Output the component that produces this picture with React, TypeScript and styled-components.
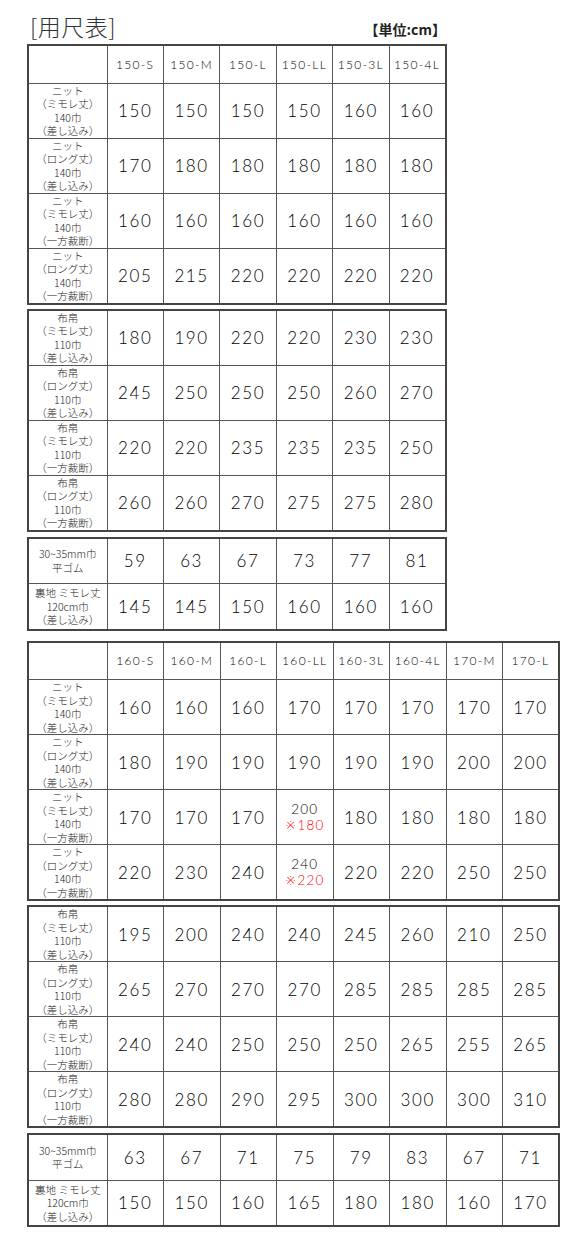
import styled, { createGlobalStyle } from "styled-components";

const GlobalStyle = createGlobalStyle`
  body {
    margin: 0;
    background: #fff;
    color: #222;
    font-family: "Noto Sans CJK JP", "Noto Sans", sans-serif;
  }
`;

const Page = styled.div`
  width: 583px;
  padding: 0 0 20px 27px;
  box-sizing: border-box;
`;

const TitleBar = styled.div`
  display: flex;
  justify-content: space-between;
  align-items: flex-end;
  width: 419px;
  height: 44px;
  padding-bottom: 6px;
  box-sizing: border-box;
`;

const Title = styled.h1`
  margin: 0 0 0 3px;
  font-size: 23px;
  line-height: 1;
  font-weight: 300;
  color: #333;
  letter-spacing: 0.5px;
`;

const Unit = styled.span`
  margin-bottom: 2px;
  font-size: 14px;
  line-height: 1;
  font-weight: 700;
  color: #222;
`;

const Block = styled.div<{ $gap: number }>`
  margin-top: ${(p) => p.$gap}px;
`;

const Group = styled.table<{ $width: number; $gap: number }>`
  width: ${(p) => p.$width}px;
  margin-top: ${(p) => p.$gap}px;
  border-collapse: collapse;
  table-layout: fixed;
  border: 2px solid #444;
`;

const Cell = styled.td<{ $h: number }>`
  height: ${(p) => p.$h}px;
  padding: 0;
  border: 1px solid #555;
  text-align: center;
  vertical-align: middle;
  box-sizing: border-box;
`;

const HeadCell = styled(Cell)`
  font-family: Lato, "DejaVu Sans", sans-serif;
  font-size: 12px;
  font-weight: 300;
  letter-spacing: 1.3px;
  color: #000;
`;

const Label = styled(Cell)`
  font-size: 10.5px;
  line-height: 13.5px;
  font-weight: 300;
  color: #222;
  white-space: pre-line;
`;

const Num = styled(Cell)`
  font-family: Lato, "DejaVu Sans", sans-serif;
  font-size: 17px;
  font-weight: 300;
  letter-spacing: 1.6px;
  color: #000;
`;

const Stack = styled.div`
  display: flex;
  flex-direction: column;
  align-items: center;
  font-size: 13.5px;
  font-weight: 300;
  line-height: 16px;
  letter-spacing: 1.2px;
`;

const Note = styled.span`
  color: #f00;
`;

type Value = number | { main: number; note: number };
type Row = { label: string; values: Value[] };

const knitMimoreSashi = "ニット\n（ミモレ丈）\n140巾\n（差し込み）";
const knitLongSashi = "ニット\n（ロング丈）\n140巾\n（差し込み）";
const knitMimoreIppo = "ニット\n（ミモレ丈）\n140巾\n（一方裁断）";
const knitLongIppo = "ニット\n（ロング丈）\n140巾\n（一方裁断）";
const fabMimoreSashi = "布帛\n（ミモレ丈）\n110巾\n（差し込み）";
const fabLongSashi = "布帛\n（ロング丈）\n110巾\n（差し込み）";
const fabMimoreIppo = "布帛\n（ミモレ丈）\n110巾\n（一方裁断）";
const fabLongIppo = "布帛\n（ロング丈）\n110巾\n（一方裁断）";
const gum = "30~35mm巾\n平ゴム";
const lining = "裏地 ミモレ丈\n120cm巾\n（差し込み）";

const tables: { sizes: string[]; groups: Row[][] }[] = [
  {
    sizes: ["150-S", "150-M", "150-L", "150-LL", "150-3L", "150-4L"],
    groups: [
      [
        { label: knitMimoreSashi, values: [150, 150, 150, 150, 160, 160] },
        { label: knitLongSashi, values: [170, 180, 180, 180, 180, 180] },
        { label: knitMimoreIppo, values: [160, 160, 160, 160, 160, 160] },
        { label: knitLongIppo, values: [205, 215, 220, 220, 220, 220] },
      ],
      [
        { label: fabMimoreSashi, values: [180, 190, 220, 220, 230, 230] },
        { label: fabLongSashi, values: [245, 250, 250, 250, 260, 270] },
        { label: fabMimoreIppo, values: [220, 220, 235, 235, 235, 250] },
        { label: fabLongIppo, values: [260, 260, 270, 275, 275, 280] },
      ],
      [
        { label: gum, values: [59, 63, 67, 73, 77, 81] },
        { label: lining, values: [145, 145, 150, 160, 160, 160] },
      ],
    ],
  },
  {
    sizes: ["160-S", "160-M", "160-L", "160-LL", "160-3L", "160-4L", "170-M", "170-L"],
    groups: [
      [
        { label: knitMimoreSashi, values: [160, 160, 160, 170, 170, 170, 170, 170] },
        { label: knitLongSashi, values: [180, 190, 190, 190, 190, 190, 200, 200] },
        {
          label: knitMimoreIppo,
          values: [170, 170, 170, { main: 200, note: 180 }, 180, 180, 180, 180],
        },
        {
          label: knitLongIppo,
          values: [220, 230, 240, { main: 240, note: 220 }, 220, 220, 250, 250],
        },
      ],
      [
        { label: fabMimoreSashi, values: [195, 200, 240, 240, 245, 260, 210, 250] },
        { label: fabLongSashi, values: [265, 270, 270, 270, 285, 285, 285, 285] },
        { label: fabMimoreIppo, values: [240, 240, 250, 250, 250, 265, 255, 265] },
        { label: fabLongIppo, values: [280, 280, 290, 295, 300, 300, 300, 310] },
      ],
      [
        { label: gum, values: [63, 67, 71, 75, 79, 83, 67, 71] },
        { label: lining, values: [150, 150, 160, 165, 180, 180, 160, 170] },
      ],
    ],
  },
];

const LABEL_W = 79;
const COL_W = 56.75;

function ValueCell({ value, h }: { value: Value; h: number }) {
  if (typeof value === "number") return <Num $h={h}>{value}</Num>;
  return (
    <Num $h={h}>
      <Stack>
        <span>{value.main}</span>
        <Note>※{value.note}</Note>
      </Stack>
    </Num>
  );
}

function SizeTable({ sizes, groups }: { sizes: string[]; groups: Row[][] }) {
  const width = LABEL_W + sizes.length * COL_W;
  const cols = (
    <colgroup>
      <col style={{ width: LABEL_W }} />
      {sizes.map((s) => (
        <col key={s} />
      ))}
    </colgroup>
  );

  return (
    <>
      {groups.map((rows, gi) => {
        const short = gi === groups.length - 1;
        return (
          <Group key={gi} $width={width} $gap={gi === 0 ? 0 : short ? 5 : 4}>
            {cols}
            <tbody>
              {gi === 0 && (
                <tr>
                  <HeadCell $h={38} />
                  {sizes.map((s) => (
                    <HeadCell key={s} $h={38}>
                      {s}
                    </HeadCell>
                  ))}
                </tr>
              )}
              {rows.map((row, ri) => {
                const h = short ? 46 : 55;
                return (
                  <tr key={ri}>
                    <Label $h={h}>{row.label}</Label>
                    {row.values.map((v, vi) => (
                      <ValueCell key={vi} value={v} h={h} />
                    ))}
                  </tr>
                );
              })}
            </tbody>
          </Group>
        );
      })}
    </>
  );
}

export default function App() {
  return (
    <Page>
      <GlobalStyle />
      <TitleBar>
        <Title>[用尺表]</Title>
        <Unit>【単位:cm】</Unit>
      </TitleBar>
      {tables.map((t, i) => (
        <Block key={i} $gap={i === 0 ? 0 : 10}>
          <SizeTable sizes={t.sizes} groups={t.groups} />
        </Block>
      ))}
    </Page>
  );
}
